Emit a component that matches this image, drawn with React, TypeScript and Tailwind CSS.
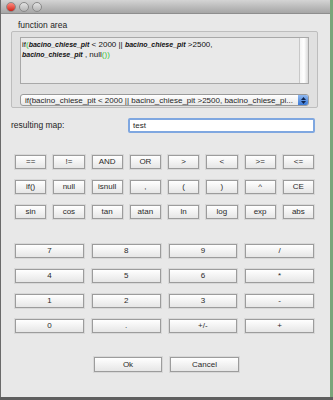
import type { ReactNode } from "react";

const ops = ["==", "!=", "AND", "OR", ">", "<", ">=", "<="];
const funcs = ["if()", "null", "isnull", ",", "(", ")", "^", "CE"];
const math = ["sin", "cos", "tan", "atan", "ln", "log", "exp", "abs"];
const numbers = [
  ["7", "8", "9", "/"],
  ["4", "5", "6", "*"],
  ["1", "2", "3", "-"],
  ["0", ".", "+/-", "+"],
];

function MacButton({ children, className = "" }: { children: ReactNode; className?: string }) {
  return (
    <button
      className={`h-[14px] flex items-center justify-center border border-[#9c9c9c] bg-gradient-to-b from-[#ffffff] to-[#e6e6e6] text-[8px] leading-none text-[#2a2a2a] shadow-[0_0_0_1px_#d8d8d8] ${className}`}
    >
      {children}
    </button>
  );
}

function Var() {
  return <span className="font-bold italic text-[7px]">bacino_chiese_pit</span>;
}

function TrafficLight({ color }: { color: string }) {
  return <span className={`w-[10px] h-[10px] rounded-full border border-[#8a8a8a] ${color}`} />;
}

export default function App() {
  return (
    <div
      className="w-[333px] h-[400px] flex flex-col bg-[#6f9a70] overflow-hidden"
      style={{ fontFamily: '"Liberation Sans", Arial, sans-serif' }}
    >
      <div className="flex h-[397px]">
        <div className="w-[330px] h-full flex flex-col bg-[#e8e8e8] border-l border-[#6a6a6a]">
          {/* title bar */}
          <div className="h-[14px] flex items-center gap-[3px] pl-[5px] bg-gradient-to-b from-[#d4d4d4] to-[#a6a6a6] border-b border-[#8e8e8e]">
            <TrafficLight color="bg-gradient-to-b from-[#ff8a80] to-[#d0160e]" />
            <TrafficLight color="bg-gradient-to-b from-[#e4e4e4] to-[#b4b4b4]" />
            <TrafficLight color="bg-gradient-to-b from-[#e4e4e4] to-[#b4b4b4]" />
          </div>

          <div className="flex flex-col pl-[10px] pr-[12px] text-[8px] text-[#1e1e1e]">
            <div className="pl-[7px] pt-[6px] h-[17px] leading-[11px] text-[8.5px]">function area</div>

            {/* group box */}
            <div className="h-[77px] border border-[#bdbdbd] bg-[#e0e0e0] rounded-[2px] px-[8px] pt-[5px]">
              <div className="h-[47px] flex border border-[#a8a8a8] bg-[#e9e9e9]">
                <div className="flex-1 px-[1px] pt-[2px] leading-[10px] text-[8px] text-[#111]">
                  <div>
                    if<span className="text-[#3cc43c]">(</span>
                    <Var /> &lt; 2000 || <Var /> &gt;2500,
                  </div>
                  <div>
                    <Var /> , null<span className="text-[#3cc43c]">())</span>
                  </div>
                </div>
                <div className="w-[9px] border-l border-[#c8c8c8] bg-gradient-to-r from-[#f4f4f4] via-[#ffffff] to-[#d8d8d8]" />
              </div>
              <div className="mt-[10px] h-[12px] flex border border-[#9a9a9a] rounded-[3px] bg-gradient-to-b from-[#ffffff] to-[#e8e8e8] overflow-hidden">
                <div className="flex-1 pl-[4px] leading-[11px] text-[8px] whitespace-nowrap overflow-hidden">
                  if(bacino_chiese_pit &lt; 2000 || bacino_chiese_pit &gt;2500, bacino_chiese_pi...
                </div>
                <div className="w-[10px] flex flex-col items-center justify-center gap-[1px] bg-gradient-to-b from-[#8fb8f0] to-[#3a7ad8]">
                  <svg width="5" height="3" viewBox="0 0 5 3"><path d="M0 3 L2.5 0 L5 3 Z" fill="#10244a" /></svg>
                  <svg width="5" height="3" viewBox="0 0 5 3"><path d="M0 0 L2.5 3 L5 0 Z" fill="#10244a" /></svg>
                </div>
              </div>
            </div>

            {/* resulting map */}
            <div className="mt-[10px] h-[15px] flex items-center">
              <div className="w-[117px] text-[8.5px]">resulting map:</div>
              <div className="w-[187px] h-[15px] border-2 border-[#7fa7e0] rounded-[2px] bg-white pl-[3px] leading-[11px] text-[8px]">
                test
              </div>
            </div>

            {/* operators */}
            <div className="mt-[22px] px-[4px] grid grid-cols-8 gap-x-[7px] gap-y-[11px]">
              {[...ops, ...funcs, ...math].map((k, i) => (
                <MacButton key={i}>{k}</MacButton>
              ))}
            </div>

            {/* numbers */}
            <div className="mt-[25px] px-[4px] grid grid-cols-4 gap-x-[8px] gap-y-[11px]">
              {numbers.flat().map((k, i) => (
                <MacButton key={i}>{k}</MacButton>
              ))}
            </div>

            <div className="mt-[24px] flex justify-center gap-[8px] pl-[4px]">
              <MacButton className="w-[68px] h-[15px]">Ok</MacButton>
              <MacButton className="w-[69px] h-[15px]">Cancel</MacButton>
            </div>
          </div>
        </div>
        <div className="flex-1 bg-[#7aa57a]" />
      </div>
      <div className="flex-1 bg-[#5e5e5e]" />
    </div>
  );
}
